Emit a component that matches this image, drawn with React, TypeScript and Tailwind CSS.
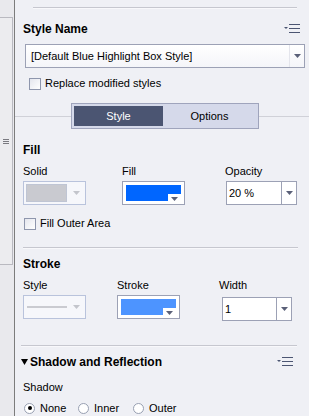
import React from "react";

const font = { fontFamily: '"Liberation Sans", Arial, sans-serif' };

function MenuIcon() {
  return (
    <svg width="16" height="10" viewBox="0 0 16 10">
      <path d="M0 3h4l-2 2z" fill="#4b5572" />
      <rect x="5" y="0" width="11" height="1" fill="#4b5572" />
      <rect x="5" y="4" width="11" height="1" fill="#4b5572" />
      <rect x="5" y="8" width="11" height="1" fill="#4b5572" />
    </svg>
  );
}

function Arrow({ color = "#5a6078" }: { color?: string }) {
  return (
    <svg width="7" height="4" viewBox="0 0 7 4">
      <path d="M0 0h7l-3.5 4z" fill={color} />
    </svg>
  );
}

function Check({ label }: { label: string }) {
  return (
    <div className="flex h-[13px] items-center gap-[4px]">
      <div className="h-[12px] w-[12px] border border-[#8e96ad] bg-gradient-to-br from-[#e4e6ee] to-white" />
      <span className="text-[11px] leading-[13px] text-black">{label}</span>
    </div>
  );
}

function Rule({ className }: { className: string }) {
  return <div className={"h-[2px] border-t border-[#c6c7cf] bg-[#f8f8fb] " + className} />;
}

function Combo({ value, w }: { value: string; w: string }) {
  return (
    <div className={"flex h-[24px] border border-[#9ca1b5] bg-white " + w}>
      <div className="flex-1 pl-[2px] text-[11px] leading-[22px] text-black">{value}</div>
      <div className="flex w-[15px] items-center justify-center border-l border-[#9ca1b5]">
        <Arrow />
      </div>
    </div>
  );
}

function Swatch({ color }: { color: string }) {
  return (
    <div className="relative h-[24px] w-[63px] border border-[#9ca1b5] bg-white p-[3px]">
      <div className="h-full w-full" style={{ background: color }} />
      <div className="absolute bottom-[2px] right-[3px] flex h-[8px] w-[13px] items-end justify-center bg-white pb-[1px]">
        <Arrow />
      </div>
    </div>
  );
}

function Radio({ label, on, w }: { label: string; on?: boolean; w: string }) {
  return (
    <div className={"flex items-center gap-[5px] " + w}>
      <div className="flex h-[11px] w-[11px] items-center justify-center rounded-full border border-[#98a0b2] bg-white">
        {on && <div className="h-[4px] w-[4px] rounded-full bg-black" />}
      </div>
      <span className="text-[11px] leading-[14px] text-black">{label}</span>
    </div>
  );
}

export default function App() {
  return (
    <div className="flex h-[416px] w-[309px] overflow-hidden bg-[#eff0f5]" style={font}>
      <div className="w-[14px] shrink-0 bg-[#e9e9ed] pt-[17px]">
        <div className="flex h-[248px] w-[13px] items-center border-y border-r border-[#b9b9c0] bg-[#ececef] pl-[3px]">
          <div className="flex w-[6px] flex-col gap-[1px]">
            <div className="h-px bg-[#7a7a80]" />
            <div className="h-px bg-[#7a7a80]" />
            <div className="h-px bg-[#7a7a80]" />
          </div>
        </div>
      </div>
      <div className="w-px shrink-0 bg-[#7c7c7c]" />
      <div className="flex-1">
        <Rule className="ml-[18px] mr-[12px] mt-[7px]" />
        <div className="ml-[8px] mr-[9px] mt-[13px] flex h-[14px] items-center justify-between">
          <span className="text-[12px] font-bold leading-[14px] text-black">Style Name</span>
          <MenuIcon />
        </div>
        <div className="ml-[10px] mr-[4px] mt-[8px] flex h-[24px] border border-[#9ca1b5] bg-gradient-to-b from-white to-[#f4f5f9]">
          <div className="flex-1 pl-[5px] text-[11px] leading-[22px] text-black">[Default Blue Highlight Box Style]</div>
          <div className="flex w-[15px] items-center justify-center border-l border-[#e4e5ec]">
            <Arrow />
          </div>
        </div>
        <div className="ml-[14px] mt-[9px]">
          <Check label="Replace modified styles" />
        </div>
        <div className="mt-[13px] flex h-[26px] items-center">
          <div className="h-px flex-1 bg-[#d0d1d8]" />
          <div className="flex h-[26px] w-[188px] border border-[#9fa4bc] bg-[#d5d9ea] p-[2px]">
            <div className="w-[89px] bg-[#4b5572] text-center text-[11px] leading-[20px] text-white">Style</div>
            <div className="flex-1 text-center text-[11px] leading-[21px] text-black">Options</div>
          </div>
          <div className="h-px w-[50px] bg-[#d0d1d8]" />
        </div>

        <div className="ml-[8px] mt-[14px] text-[12px] font-bold leading-[14px] text-black">Fill</div>
        <div className="ml-[8px] mt-[7px] flex text-[11px] leading-[14px] text-black">
          <span className="w-[99px]">Solid</span>
          <span className="w-[103px]">Fill</span>
          <span>Opacity</span>
        </div>
        <div className="ml-[8px] mt-[3px] flex">
          <div className="flex h-[24px] w-[63px] items-center border border-[#b9c3dc] bg-[#f6f7fb] pl-[2px]">
            <div className="h-[18px] w-[41px] border border-[#bfc5d4] bg-[#c9cad0]" />
            <div className="flex flex-1 justify-center">
              <Arrow color="#c3c5cc" />
            </div>
          </div>
          <div className="ml-[36px]">
            <Swatch color="#0066ff" />
          </div>
          <div className="ml-[41px]">
            <Combo value="20 %" w="w-[71px]" />
          </div>
        </div>
        <div className="ml-[9px] mt-[12px]">
          <Check label="Fill Outer Area" />
        </div>
        <Rule className="ml-[8px] mr-[11px] mt-[17px]" />

        <div className="ml-[8px] mt-[8px] text-[12px] font-bold leading-[14px] text-black">Stroke</div>
        <div className="ml-[8px] mt-[7px] flex text-[11px] leading-[14px] text-black">
          <span className="w-[94px]">Style</span>
          <span className="w-[102px]">Stroke</span>
          <span>Width</span>
        </div>
        <div className="ml-[8px] mt-[3px] flex">
          <div className="flex h-[24px] w-[63px] items-center border border-[#b9c3dc] bg-[#f6f7fb] pl-[3px]">
            <div className="h-[2px] w-[40px] bg-[#cacbd1]" />
            <div className="flex flex-1 justify-center">
              <Arrow color="#c3c5cc" />
            </div>
          </div>
          <div className="ml-[31px]">
            <Swatch color="#4d94ff" />
          </div>
          <div className="ml-[42px] mt-[2px]">
            <Combo value="1" w="w-[70px]" />
          </div>
        </div>
        <Rule className="ml-[6px] mr-[12px] mt-[24px]" />

        <div className="ml-[6px] mr-[16px] mt-[8px] flex h-[14px] items-center justify-between">
          <div className="flex items-center gap-[2px]">
            <svg width="7" height="6" viewBox="0 0 7 6">
              <path d="M0 0h7l-3.5 6z" fill="#000" />
            </svg>
            <span className="text-[12px] font-bold leading-[14px] text-black">Shadow and Reflection</span>
          </div>
          <MenuIcon />
        </div>
        <div className="ml-[8px] mt-[11px] text-[11px] leading-[14px] text-black">Shadow</div>
        <div className="ml-[9px] mt-[7px] flex">
          <Radio label="None" on w="w-[54px]" />
          <Radio label="Inner" w="w-[55px]" />
          <Radio label="Outer" w="w-[60px]" />
        </div>
      </div>
    </div>
  );
}
